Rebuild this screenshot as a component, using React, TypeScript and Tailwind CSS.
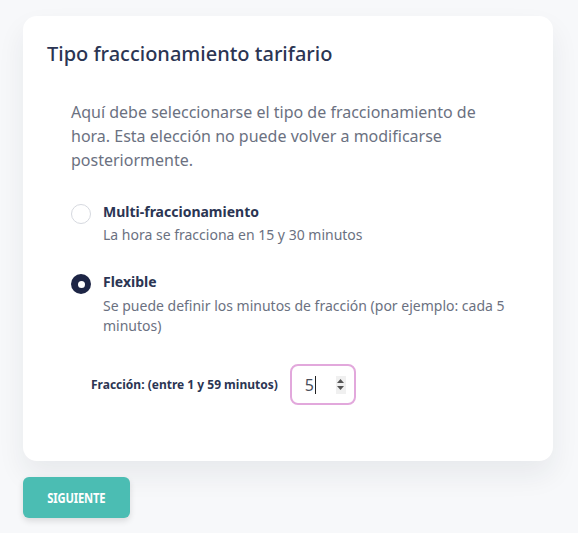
export default function App() {
  return (
    <div className="min-h-[533px] bg-[#f7f8fa] px-[23px] pt-4 pb-4" style={{ fontFamily: '"Noto Sans", "Open Sans", sans-serif' }}>
      <div className="w-[530px] rounded-[14px] bg-white px-6 pt-6 pb-14 shadow-[0_14px_28px_rgba(30,40,60,0.07)]">
        <h2 className="text-[20px] leading-7 font-medium text-[#2b3553]">Tipo fraccionamiento tarifario</h2>

        <div className="pl-6 pr-6">
          <p className="mt-8 text-[16px] leading-6 text-[#6b7181]">
            Aquí debe seleccionarse el tipo de fraccionamiento de hora. Esta elección no puede volver a modificarse posteriormente.
          </p>

          <div className="mt-[30px] flex gap-3">
            <div className="mt-[2px] h-5 w-5 shrink-0 rounded-full border border-[#d6d9df] bg-white" />
            <div>
              <div className="text-[14px] leading-5 font-bold text-[#2b3553]">Multi-fraccionamiento</div>
              <div className="mt-[3px] text-[14px] leading-5 text-[#6b7181]">La hora se fracciona en 15 y 30 minutos</div>
            </div>
          </div>

          <div className="mt-[27px] flex gap-3">
            <div className="mt-[2px] flex h-5 w-5 shrink-0 items-center justify-center rounded-full bg-[#1d2545]">
              <div className="h-[7px] w-[7px] rounded-full bg-white" />
            </div>
            <div>
              <div className="text-[14px] leading-5 font-bold text-[#2b3553]">Flexible</div>
              <div className="mt-[4px] text-[14px] leading-5 text-[#6b7181]">
                Se puede definir los minutos de fracción (por ejemplo: cada 5 minutos)
              </div>
            </div>
          </div>
        </div>

        <div className="mt-7 flex items-center gap-3 pl-[44px]">
          <span className="text-[12px] font-bold text-[#2b3553]">Fracción: (entre 1 y 59 minutos)</span>
          <div className="flex h-[41px] w-[66px] items-center rounded-lg border-2 border-[#e2a8dc] pl-[13px] pr-2">
            <span className="text-[16px] text-[#4a4f5b]">5</span>
            <span className="ml-px h-[18px] w-px bg-[#222]" />
            <div className="ml-auto flex h-[18px] w-[10px] flex-col items-center justify-center gap-[3px] bg-[#f0f0f0]">
              <svg width="7" height="4" viewBox="0 0 7 4"><path d="M0 4L3.5 0L7 4Z" fill="#555" /></svg>
              <svg width="7" height="4" viewBox="0 0 7 4"><path d="M0 0L3.5 4L7 0Z" fill="#555" /></svg>
            </div>
          </div>
        </div>
      </div>

      <button className="mt-4 flex h-[41px] w-[107px] items-center justify-center rounded-md bg-[#4bbdb3] text-white shadow-[0_3px_6px_rgba(0,0,0,0.12)]">
        <span className="inline-block scale-x-[0.8] text-[14px] font-bold tracking-[-0.2px]">SIGUIENTE</span>
      </button>
    </div>
  )
}
